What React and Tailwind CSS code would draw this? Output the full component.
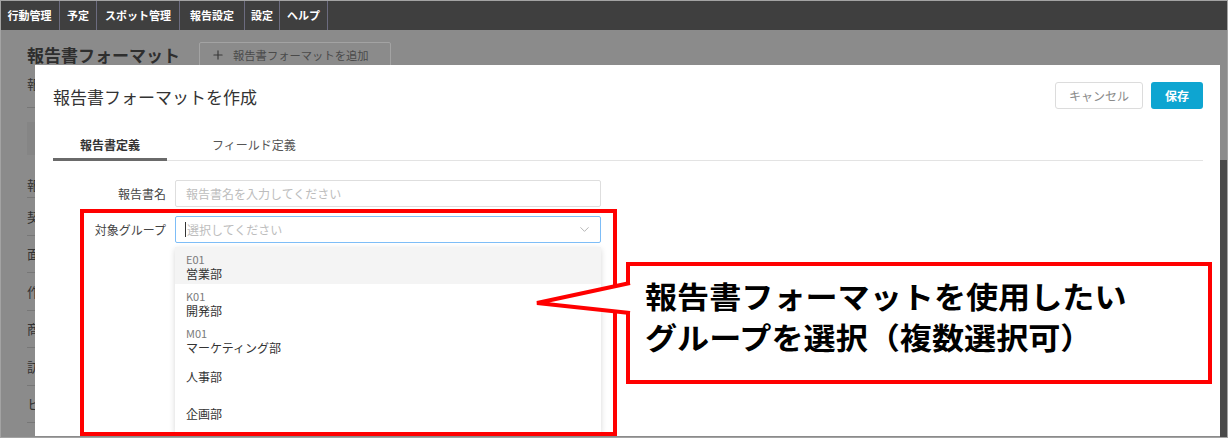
import { ChevronDown, Plus } from 'lucide-react'

const navItems = [
  { label: '行動管理', w: 'w-[60px]' },
  { label: '予定', w: 'w-[37px]' },
  { label: 'スポット管理', w: 'w-[83px]' },
  { label: '報告設定', w: 'w-[65px]' },
  { label: '設定', w: 'w-[35px]' },
  { label: 'ヘルプ', w: 'w-[48px]' },
]

const sideRows = ['契', '面', '作', '商', '訪', 'ヒ']

const groups = [
  { code: 'E01', name: '営業部', active: true },
  { code: 'K01', name: '開発部' },
  { code: 'M01', name: 'マーケティング部' },
  { name: '人事部' },
  { name: '企画部' },
]

function BackgroundPage() {
  return (
    <div className="flex flex-col">
      <nav className="flex h-[30px] bg-[#3f3f3f]">
        {navItems.map((it) => (
          <div
            key={it.label}
            className={`${it.w} flex items-center justify-center border-r border-[#6c6c80] text-[11px] font-bold text-white`}
          >
            {it.label}
          </div>
        ))}
      </nav>

      <div className="pl-[27px]">
        <div className="mt-[12px] flex h-[26px] items-center">
          <div className="text-[17px] font-bold text-[#2e2e2e]">報告書フォーマット</div>
          <div className="ml-[19px] flex h-[26px] w-[192px] items-center gap-[8px] rounded-[2px] border border-[#a3a3a3] pl-[11px] text-[11.3px] text-[#4a4a4a]">
            <Plus size={14} strokeWidth={2} className="text-[#3a3a3a]" />
            報告書フォーマットを追加
          </div>
        </div>

        {/* only a sliver of this column shows beside the modal */}
        <div className="w-[200px] text-[13px] text-[#333]">
          <div className="h-[40px] border-b border-[#777] pt-[7px] leading-[17px]">報</div>
          <div className="mt-[14px] h-[33px] bg-[#858585]" />
          <div className="mt-[21px] h-[22px] border-b border-[#777] leading-[17px]">報</div>
          {sideRows.map((c) => (
            <div key={c} className="flex h-[37.5px] items-center border-b border-[#777]">
              {c}
            </div>
          ))}
        </div>
      </div>
    </div>
  )
}

function Modal() {
  return (
    <div className="absolute left-[35px] top-[65px] h-[371px] w-[1185px] overflow-hidden bg-white pl-[18px] pr-[17px] pt-[17px]">
      <div className="flex h-[27px] items-center justify-between">
        <div className="pt-[3px] text-[17px] text-[#333]">報告書フォーマットを作成</div>
        <div className="flex gap-[8px]">
          <div className="flex h-[27px] w-[88px] items-center justify-center rounded-[3px] border border-[#dcdcdc] text-[12px] text-[#8a8a8a]">
            キャンセル
          </div>
          <div className="flex h-[27px] w-[52px] items-center justify-center rounded-[3px] bg-[#0ea5d1] text-[12px] font-bold text-white">
            保存
          </div>
        </div>
      </div>

      <div className="mt-[18px] flex gap-[18px] border-b border-[#e3e3e3]">
        <div className="-mb-px border-b-[3px] border-[#6a6a6a] px-[27px] pb-[5px] pt-[9px] text-[12px] font-bold leading-[17px] text-[#333]">
          報告書定義
        </div>
        <div className="-mb-px border-b-[3px] border-transparent px-[27px] pb-[5px] pt-[9px] text-[12px] leading-[17px] text-[#555]">
          フィールド定義
        </div>
      </div>

      <div className="mt-[19px] flex flex-col gap-[9px]">
        <div className="flex items-center gap-[9px]">
          <div className="w-[113px] text-right text-[12px] text-[#444]">報告書名</div>
          <div className="flex h-[27px] w-[426px] items-center rounded-[2px] border border-[#dedede] px-[10px] text-[12px] text-[#bdbdbd]">
            報告書名を入力してください
          </div>
        </div>
        <div className="flex items-center gap-[9px]">
          <div className="w-[113px] text-right text-[12px] text-[#444]">対象グループ</div>
          <div className="flex h-[27px] w-[426px] items-center rounded-[2px] border border-[#7dbdf7] pl-[9px] pr-[8px] text-[12px] text-[#bdbdbd]">
            <span className="mr-[1px] h-[15px] w-px bg-[#333]" />
            <span className="flex-1">選択してください</span>
            <ChevronDown size={15} strokeWidth={1.5} className="text-[#b0b0b0]" />
          </div>
        </div>
      </div>

      <div className="ml-[122px] mt-[4px] w-[426px] bg-white shadow-[0_2px_6px_rgba(0,0,0,0.16)]">
        {groups.map((g) =>
          g.code ? (
            <div
              key={g.name}
              className={`h-[37px] pl-[11px] pt-[6px] ${g.active ? 'bg-[#f4f4f4]' : ''}`}
            >
              <div className="text-[11px] leading-[13px] text-[#7a7a7a]">{g.code}</div>
              <div className="text-[12px] leading-[15px] text-[#333]">{g.name}</div>
            </div>
          ) : (
            <div key={g.name} className="flex h-[37px] items-center pl-[11px] text-[12px] text-[#333]">
              {g.name}
            </div>
          )
        )}
      </div>
    </div>
  )
}

function Callout() {
  return (
    <>
      <div className="absolute left-[626px] top-[262px] h-[122px] w-[586px] border-4 border-[#ff0000] bg-white pl-[15px] pt-[9px]">
        <div className="origin-left scale-x-[1.07] text-[30px] font-bold leading-[41px] text-black">
          <div>報告書フォーマットを使用したい</div>
          <div>グループを選択（複数選択可）</div>
        </div>
      </div>
      <svg className="absolute left-[530px] top-[270px]" width="106" height="50" viewBox="0 0 106 50">
        <polyline
          points="100,13 7,33 100,43"
          fill="white"
          stroke="#ff0000"
          strokeWidth="4"
          strokeLinejoin="miter"
        />
      </svg>
    </>
  )
}

export default function App() {
  return (
    <div className="relative h-[438px] w-[1228px] overflow-hidden bg-[#8b8b8b] font-['Noto_Sans_CJK_JP',sans-serif]">
      <BackgroundPage />
      <Modal />
      <div className="absolute left-[1220px] top-[160px] h-[278px] w-[7px] bg-[#4a4a4a]" />
      <div className="absolute left-[80px] top-[209px] h-[227px] w-[537px] border-4 border-[#ff0000]" />
      <Callout />
      <div className="pointer-events-none absolute inset-0 border border-[#a3a3a3]" />
    </div>
  )
}
